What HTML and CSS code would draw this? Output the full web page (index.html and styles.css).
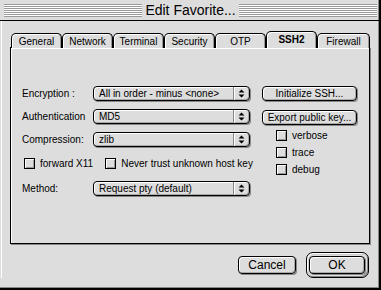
FILE: index.html
```html
<!DOCTYPE html>
<html>
  <head>
    <meta name="viewport" content="width=device-width, initial-scale=1.0">
    <title>Edit Favorite...</title>
    <link rel="stylesheet" href="styles.css">
  </head>
  <body>
    <div class="window">
      <div class="titlebar">
        <div class="stripes"></div>
        <span class="title">Edit Favorite...</span>
        <div class="stripes"></div>
      </div>
      <div class="body">
        <div class="tabs">
          <div class="tab">General</div>
          <div class="tab">Network</div>
          <div class="tab">Terminal</div>
          <div class="tab">Security</div>
          <div class="tab">OTP</div>
          <div class="tab selected">SSH2</div>
          <div class="tab wide">Firewall</div>
        </div>
        <div class="panel">
          <div class="left">
            <div class="row">
              <label class="label">Encryption :</label>
              <div class="popup">
                <span class="popup-text">All in order - minus &lt;none&gt;</span>
                <span class="popup-arrow">
                  <svg width="7" height="9" viewBox="0 0 7 9"><path d="M3.5 0.5 L6.5 3.5 L0.5 3.5 Z M0.5 5.5 L6.5 5.5 L3.5 8.5 Z" fill="#000"/></svg>
                </span>
              </div>
            </div>
            <div class="row">
              <label class="label">Authentication</label>
              <div class="popup">
                <span class="popup-text">MD5</span>
                <span class="popup-arrow">
                  <svg width="7" height="9" viewBox="0 0 7 9"><path d="M3.5 0.5 L6.5 3.5 L0.5 3.5 Z M0.5 5.5 L6.5 5.5 L3.5 8.5 Z" fill="#000"/></svg>
                </span>
              </div>
            </div>
            <div class="row">
              <label class="label">Compression:</label>
              <div class="popup">
                <span class="popup-text">zlib</span>
                <span class="popup-arrow">
                  <svg width="7" height="9" viewBox="0 0 7 9"><path d="M3.5 0.5 L6.5 3.5 L0.5 3.5 Z M0.5 5.5 L6.5 5.5 L3.5 8.5 Z" fill="#000"/></svg>
                </span>
              </div>
            </div>
            <div class="check-row">
              <div class="check"><span class="box"></span>forward X11</div>
              <div class="check"><span class="box"></span>Never trust unknown host key</div>
            </div>
            <div class="row">
              <label class="label">Method:</label>
              <div class="popup">
                <span class="popup-text">Request pty (default)</span>
                <span class="popup-arrow">
                  <svg width="7" height="9" viewBox="0 0 7 9"><path d="M3.5 0.5 L6.5 3.5 L0.5 3.5 Z M0.5 5.5 L6.5 5.5 L3.5 8.5 Z" fill="#000"/></svg>
                </span>
              </div>
            </div>
          </div>
          <div class="right">
            <div class="button">Initialize SSH...</div>
            <div class="button">Export public key...</div>
            <div class="checks">
              <div class="check"><span class="box"></span>verbose</div>
              <div class="check"><span class="box"></span>trace</div>
              <div class="check"><span class="box"></span>debug</div>
            </div>
          </div>
        </div>
        <div class="footer">
          <div class="button cancel">Cancel</div>
          <div class="default-ring">
            <div class="button ok">OK</div>
          </div>
        </div>
      </div>
    </div>
  </body>
</html>
```

FILE: styles.css
```css
body {
  margin: 0;
  font-family: "Liberation Sans", Arial, sans-serif;
  font-size: 10px;
  color: #000;
  background-color: #dddddd;
}

.window {
  width: 381px;
  height: 290px;
  box-sizing: border-box;
  background-color: #dddddd;
  border-right: 2px solid #000;
  border-bottom: 2px solid #000;
  box-shadow: inset -1px -1px 0 #888;
}

.titlebar {
  height: 20px;
  display: flex;
  align-items: center;
  padding: 0 2px 0 4px;
  border-bottom: 1px solid #000;
}

.stripes {
  flex: 1;
  height: 13px;
  background: repeating-linear-gradient(to bottom, #999999 0, #999999 1px, #ffffff 1px, #ffffff 2px);
}

.title {
  font-size: 14px;
  padding: 0 3px;
  line-height: 20px;
}

.body {
  padding: 10px 0 0 8px;
  border-left: 1px solid #fff;
  margin-left: 1px;
}

.tabs {
  display: flex;
  align-items: flex-end;
  height: 17px;
  padding-left: 1px;
  margin-bottom: -1px;
  position: relative;
  z-index: 1;
}

.tab {
  width: 51px;
  height: 15px;
  box-sizing: border-box;
  border: 1px solid #000;
  border-bottom: none;
  border-radius: 5px 5px 0 0;
  background-color: #dddddd;
  box-shadow: inset 1px 1px 0 #fff, inset -1px 0 0 #999;
  text-align: center;
  line-height: 15px;
}

.tab.wide {
  width: 53px;
}

.tab.selected {
  height: 17px;
  font-weight: bold;
  line-height: 16px;
}

.panel {
  width: 360px;
  height: 197px;
  box-sizing: border-box;
  border: 1px solid #000;
  box-shadow: 1px 1px 0 #888, inset 1px 1px 0 #fff;
  padding: 38px 0 0 11px;
  display: flex;
  gap: 12px;
}

.left {
  width: 228px;
}

.row {
  display: flex;
  align-items: center;
  height: 15px;
  margin-bottom: 8px;
}

.label {
  width: 71px;
  flex: none;
}

.popup {
  width: 157px;
  flex: none;
  height: 15px;
  box-sizing: border-box;
  border: 1px solid #000;
  border-radius: 4px;
  box-shadow: 1px 1px 0 #888, inset 1px 1px 0 #fff, inset -1px -1px 0 #aaa;
  display: flex;
  align-items: center;
}

.popup-text {
  flex: 1;
  padding-left: 5px;
  white-space: nowrap;
}

.popup-arrow {
  width: 16px;
  height: 13px;
  box-sizing: border-box;
  border-left: 1px solid #888;
  box-shadow: inset 1px 0 0 #fff;
  display: flex;
  align-items: center;
  justify-content: center;
}

.check-row {
  display: flex;
  gap: 12px;
  padding-left: 2px;
  margin: 11px 0 12px;
}

.check {
  display: flex;
  align-items: center;
  height: 11px;
  white-space: nowrap;
}

.box {
  width: 11px;
  height: 11px;
  box-sizing: border-box;
  border: 1px solid #000;
  box-shadow: inset 1px 1px 0 #fff, inset -1px -1px 0 #999;
  margin-right: 5px;
}

.right {
  width: 95px;
}

.button {
  height: 15px;
  box-sizing: border-box;
  border: 1px solid #000;
  border-radius: 4px;
  box-shadow: 1px 1px 0 #888, inset 1px 1px 0 #fff, inset -1px -1px 0 #aaa;
  text-align: center;
  line-height: 13px;
  margin-bottom: 9px;
  white-space: nowrap;
}

.checks {
  padding-left: 14px;
  margin-top: -4px;
  display: flex;
  flex-direction: column;
  gap: 6px;
}

.footer {
  display: flex;
  justify-content: flex-end;
  align-items: center;
  gap: 10px;
  padding-right: 10px;
  margin-top: 8px;
}

.footer .button {
  height: 18px;
  line-height: 16px;
  margin: 0;
  font-size: 12px;
}

.cancel {
  width: 58px;
}

.default-ring {
  width: 63px;
  height: 26px;
  box-sizing: border-box;
  border: 1px solid #000;
  border-radius: 7px;
  padding: 3px 3px 0 2px;
  box-shadow: inset 1px 1px 0 #fff, inset -1px -1px 0 #888, inset 2px 2px 0 #ccc;
}

.ok {
  width: 56px;
}
```
